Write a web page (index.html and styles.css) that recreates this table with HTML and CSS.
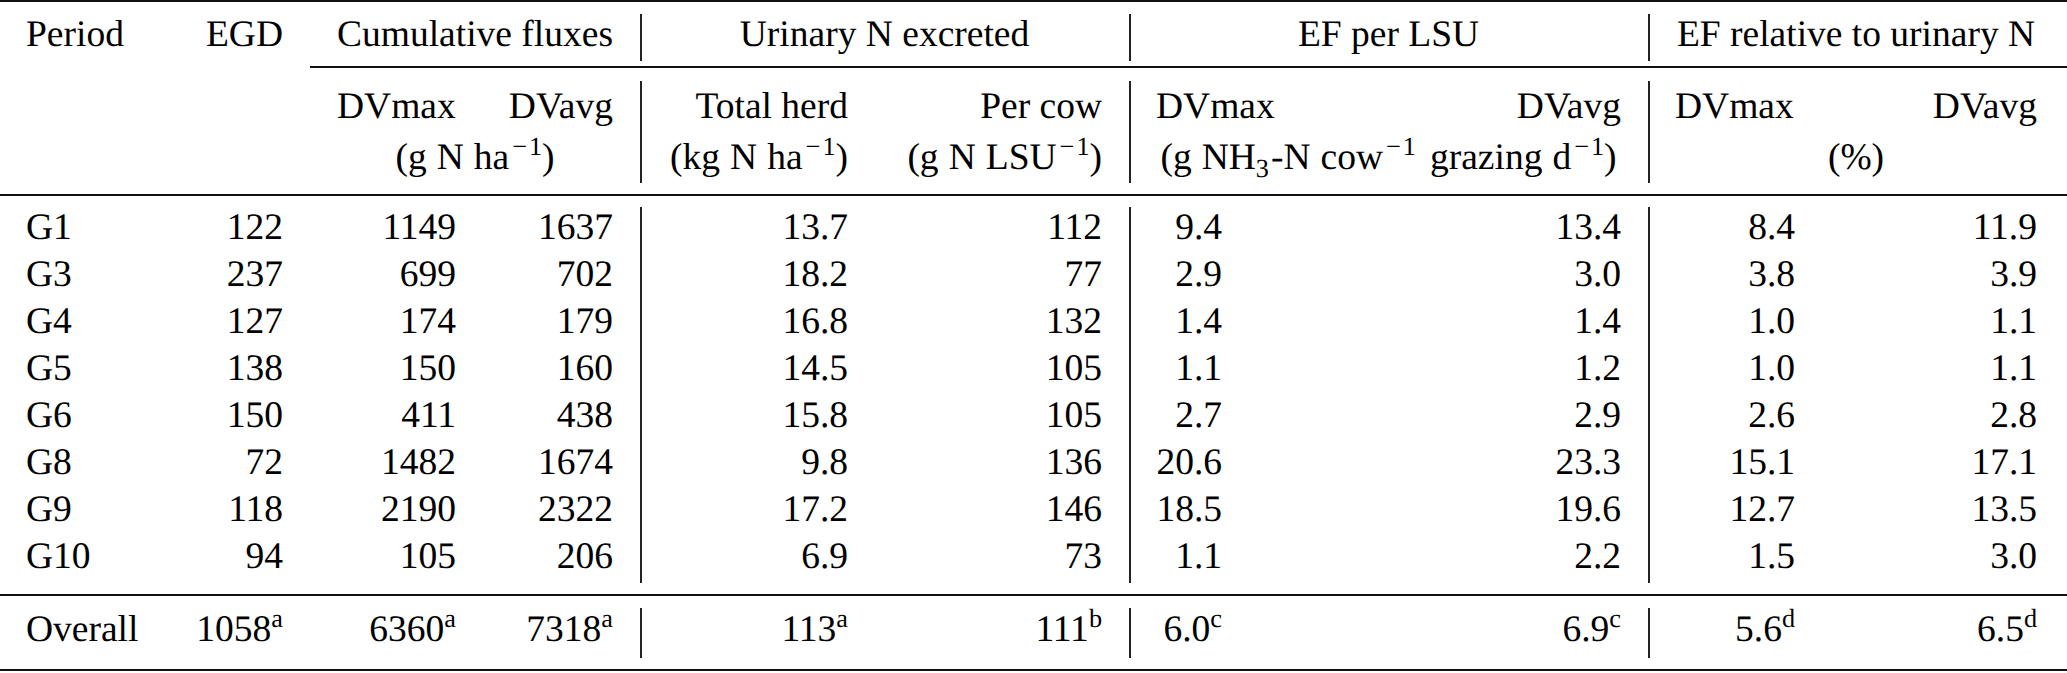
FILE: index.html
```html
<!DOCTYPE html>
<html lang="en">
<head>
<meta charset="utf-8">
<title>Ammonia emission factors</title>
<link rel="stylesheet" href="styles.css">
</head>
<body>
<table class="tbl">
  <colgroup>
    <col class="w1"><col class="w2"><col class="w3"><col class="w4"><col class="w5">
    <col class="w6"><col class="w7"><col class="w8"><col class="w9"><col class="w10">
  </colgroup>
  <tbody>
    <tr class="rule"><td colspan="10"></td></tr>
    <tr class="gap g12"><td colspan="10"></td></tr>
    <tr class="h1">
      <td class="l first">Period</td>
      <td class="r">EGD</td>
      <td colspan="2" class="c">Cumulative fluxes</td>
      <td colspan="2" class="c bar">Urinary N excreted</td>
      <td colspan="2" class="c bar">EF per LSU</td>
      <td colspan="2" class="c bar last">EF relative to urinary N</td>
    </tr>
    <tr class="gap g5"><td colspan="10"></td></tr>
    <tr class="rule cmid"><td colspan="2" class="blank"></td><td colspan="8"></td></tr>
    <tr class="gap g13"><td colspan="10"></td></tr>
    <tr class="h2">
      <td class="first"></td>
      <td></td>
      <td colspan="2">
        <div class="split"><span>DVmax</span><span>DVavg</span></div>
        <div class="c">(g<span class="sp"></span>N<span class="sp"></span>ha<sup><span class="mi">−</span>1</sup>)</div>
      </td>
      <td class="r bar">Total herd<br>(kg<span class="sp"></span>N<span class="sp"></span>ha<sup><span class="mi">−</span>1</sup>)</td>
      <td class="r">Per cow<br>(g<span class="sp"></span>N<span class="sp"></span>LSU<sup><span class="mi">−</span>1</sup>)</td>
      <td colspan="2" class="bar">
        <div class="split"><span>DVmax</span><span>DVavg</span></div>
        <div class="c">(g<span class="sp"></span>NH<sub>3</sub>-N<span class="sp"></span>cow<sup><span class="mi">−</span>1</sup><span class="ws"></span>grazing<span class="sp"></span>d<sup><span class="mi">−</span>1</sup>)</div>
      </td>
      <td colspan="2" class="bar last">
        <div class="split"><span>DVmax</span><span>DVavg</span></div>
        <div class="c">(%)</div>
      </td>
    </tr>
    <tr class="gap g11"><td colspan="10"></td></tr>
    <tr class="rule"><td colspan="10"></td></tr>
    <tr class="gap g11"><td colspan="10"></td></tr>

    <tr class="row"><td class="l first">G1</td><td class="r">122</td><td class="r">1149</td><td class="r">1637</td><td class="r bar">13.7</td><td class="r">112</td><td class="r bar">9.4</td><td class="r">13.4</td><td class="r bar">8.4</td><td class="r last">11.9</td></tr>
    <tr class="row"><td class="l first">G3</td><td class="r">237</td><td class="r">699</td><td class="r">702</td><td class="r bar">18.2</td><td class="r">77</td><td class="r bar">2.9</td><td class="r">3.0</td><td class="r bar">3.8</td><td class="r last">3.9</td></tr>
    <tr class="row"><td class="l first">G4</td><td class="r">127</td><td class="r">174</td><td class="r">179</td><td class="r bar">16.8</td><td class="r">132</td><td class="r bar">1.4</td><td class="r">1.4</td><td class="r bar">1.0</td><td class="r last">1.1</td></tr>
    <tr class="row"><td class="l first">G5</td><td class="r">138</td><td class="r">150</td><td class="r">160</td><td class="r bar">14.5</td><td class="r">105</td><td class="r bar">1.1</td><td class="r">1.2</td><td class="r bar">1.0</td><td class="r last">1.1</td></tr>
    <tr class="row"><td class="l first">G6</td><td class="r">150</td><td class="r">411</td><td class="r">438</td><td class="r bar">15.8</td><td class="r">105</td><td class="r bar">2.7</td><td class="r">2.9</td><td class="r bar">2.6</td><td class="r last">2.8</td></tr>
    <tr class="row"><td class="l first">G8</td><td class="r">72</td><td class="r">1482</td><td class="r">1674</td><td class="r bar">9.8</td><td class="r">136</td><td class="r bar">20.6</td><td class="r">23.3</td><td class="r bar">15.1</td><td class="r last">17.1</td></tr>
    <tr class="row"><td class="l first">G9</td><td class="r">118</td><td class="r">2190</td><td class="r">2322</td><td class="r bar">17.2</td><td class="r">146</td><td class="r bar">18.5</td><td class="r">19.6</td><td class="r bar">12.7</td><td class="r last">13.5</td></tr>
    <tr class="row"><td class="l first">G10</td><td class="r">94</td><td class="r">105</td><td class="r">206</td><td class="r bar">6.9</td><td class="r">73</td><td class="r bar">1.1</td><td class="r">2.2</td><td class="r bar">1.5</td><td class="r last">3.0</td></tr>

    <tr class="gap g11"><td colspan="10"></td></tr>
    <tr class="rule"><td colspan="10"></td></tr>
    <tr class="gap g12"><td colspan="10"></td></tr>
    <tr class="total"><td class="l first">Overall</td><td class="r">1058<sup>a</sup></td><td class="r">6360<sup>a</sup></td><td class="r">7318<sup>a</sup></td><td class="r bar">113<sup>a</sup></td><td class="r">111<sup>b</sup></td><td class="r bar">6.0<sup>c</sup></td><td class="r">6.9<sup>c</sup></td><td class="r bar">5.6<sup>d</sup></td><td class="r last">6.5<sup>d</sup></td></tr>
    <tr class="gap g11"><td colspan="10"></td></tr>
    <tr class="rule"><td colspan="10"></td></tr>
  </tbody>
</table>
</body>
</html>
```

FILE: styles.css
```css
html, body {
  margin: 0;
  padding: 0;
  background: #ffffff;
}

body {
  width: 2067px;
  height: 673px;
  overflow: hidden;
}

.tbl {
  width: 2067px;
  table-layout: fixed;
  border-collapse: separate;
  border-spacing: 0;
  font-family: "Liberation Serif", "Times New Roman", serif;
  font-size: 37.5px;
  line-height: 41px;
  color: #000000;
  text-rendering: geometricPrecision;
}

.tbl td {
  padding: 0 27px;
  vertical-align: top;
  white-space: nowrap;
}

.tbl td.first { padding-left: 26px; }
.tbl td.last { padding-right: 30px; }

col.w1 { width: 165px; }
col.w2 { width: 145px; }
col.w3 { width: 173px; }
col.w4 { width: 157px; }
col.w5 { width: 235px; }
col.w6 { width: 254px; }
col.w7 { width: 120px; }
col.w8 { width: 399px; }
col.w9 { width: 174px; }
col.w10 { width: 245px; }

.rule { height: 2px; }
.rule td {
  padding: 0;
  height: 2px;
  background: #111111;
  font-size: 0;
  line-height: 0;
}
.rule td.blank { background: transparent; }

.gap td {
  padding: 0;
  font-size: 0;
  line-height: 0;
}
.g5 { height: 5px; }
.g11 { height: 11px; }
.g12 { height: 12px; }
.g13 { height: 13px; }

.h1 { height: 47px; }
.h2 { height: 102px; }
.h2 td { line-height: 51px; }
.row { height: 47px; }
.total { height: 50px; }
.total td { padding-top: 1px; }

.bar { box-shadow: inset 2px 0 0 #222222; }

.l { text-align: left; }
.r { text-align: right; }
.c { text-align: center; }

.split {
  display: flex;
  justify-content: space-between;
}

.sp {
  display: inline-block;
  width: 10px;
}

.ws {
  display: inline-block;
  width: 14px;
}

.mi {
  padding: 0 2px 0 3px;
}

sup {
  font-size: 0.7em;
  vertical-align: 0.52em;
  line-height: 0;
}

sub {
  font-size: 0.7em;
  vertical-align: -0.3em;
  line-height: 0;
  padding-right: 2px;
}
```
